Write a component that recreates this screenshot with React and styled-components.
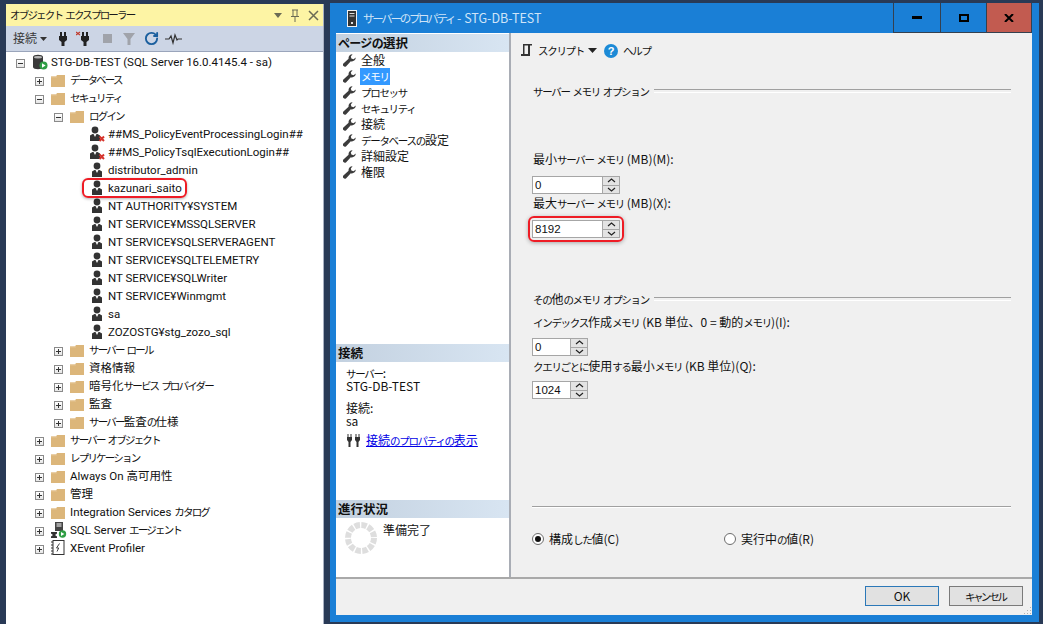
import React from "react";
import styled, { createGlobalStyle } from "styled-components";
import { RotateCw } from "lucide-react";

const Global = createGlobalStyle`
  html, body { margin: 0; padding: 0; height: 624px; overflow: hidden; background: #293a56; }
  * { box-sizing: border-box; }
`;
const UI = `Roboto, "Noto Sans CJK JP", sans-serif`;
const DLG = `"Noto Sans CJK JP", "Noto Sans", sans-serif`;

const Page = styled.div`
  width: 1043px; height: 624px; display: flex; align-items: flex-start; overflow: hidden;
  padding: 3px 0 0 6px; background: #293a56; color: #000; font-feature-settings: "palt";
`;
const Kana = styled.span`
  font-size: var(--ks, 10.500px); letter-spacing: var(--kt, -1.300px); font-family: "Noto Sans CJK JP", sans-serif;
`;
const J = ({ children }) =>
  children.split(/([\u3040-\u30ff]+)/).map((s, i) => (i % 2 ? <Kana key={i}>{s}</Kana> : s));

const Explorer = styled.section`
  --ks: 10.500px; --kt: -1.800px;
  width: 318px; height: 640px; margin-top: 1px; flex: none; display: flex; flex-direction: column;
  font: 11.500px/18px ${UI}; background: #fff; border-right: 1px solid #a8b0c2;
`;
const PaneTitle = styled.div`
  height: 22px; flex: none; background: #fdf4a4; display: flex; align-items: center;
  padding: 0 4px 0 4px; font-size: 12px; color: #1a1a1a;
`;
const PaneTitleText = styled.span` flex: 1; white-space: nowrap; `;
const PaneTools = styled.span` display: flex; align-items: center; gap: 8px; color: #6b6b55; `;
const ToolBar = styled.div`
  height: 26px; flex: none; background: #ccd5e5; display: flex; align-items: center; padding-left: 7px;
  border-bottom: 1px solid #9aa5bb; color: #333;
`;
const ToolLabel = styled.span` font-size: 12px; margin-right: 3px; color: #3a3a3a; `;
const ToolIcon = styled.span`
  width: ${p => p.$w || 22}px; height: 18px; display: flex; align-items: center; justify-content: center; flex: none;
`;
const ToolGap = styled.span` width: ${p => p.$w}px; flex: none; `;
const Tree = styled.div` padding-top: 1px; flex: 1; `;
const Row = styled.div`
  height: 18px; display: flex; align-items: center; padding-left: ${p => 4 + p.$level * 19}px; white-space: nowrap;
  color: #111;
`;
const ExpandSlot = styled.span` width: 22px; flex: none; display: flex; justify-content: center; padding-right: 3px;`;
const Expander = styled.span`
  width: 9px; height: 9px; border: 1px solid #8a8a8a; background: linear-gradient(#fff, #e6e6e6); position: relative;
  margin: 2px 0 0 1px;
  &::before { content: ""; position: absolute; left: 1px; right: 1px; top: 3px; height: 1px; background: #333; }
  &::after { content: ""; display: ${p => (p.$open ? "none" : "block")}; position: absolute; top: 1px; bottom: 1px; left: 3px; width: 1px; background: #333; }
`;
const IconSlot = styled.span` width: 19px; height: 16px; flex: none; display: flex; align-items: center; `;
const Circled = styled.span`
  position: relative; display: inline-block;
  &::after {
    content: ""; position: absolute; left: -26px; right: -5px; top: -1px; bottom: -1px;
    border: 2px solid #ee1c25; border-radius: 6px; box-shadow: 0 1px 3px rgba(0,0,0,.3);
  }
`;

const Dialog = styled.section`
  --ks: 10.500px; --kt: -1.300px;
  width: 709px; height: 619px; margin-left: 6px; flex: none; background: #1a7fd6; display: flex; flex-direction: column;
  font: 12px/16px ${DLG}; color: #111; padding: 0 7px 7px 6px;
`;
const TitleBar = styled.header` height: 30px; flex: none; display: flex; align-items: stretch; `;
const TitleMain = styled.div`
  --ks: 11.500px; --kt: -2.300px;
  flex: 1; display: flex; align-items: center; gap: 6px; padding-left: 11px; color: #cfe4f8; font-size: 12.500px;
`;
const WinBtn = styled.div`
  width: ${p => p.$w}px; background: ${p => p.$bg || "#1a7fd6"}; border: 1px solid #34404f; border-top: 0; border-right-width: ${p => (p.$last ? 1 : 0)}px;
  display: flex; align-items: center; justify-content: center;
`;
const Body = styled.div` height: 546px; flex: none; display: flex; border-bottom: 2px solid #a9a9a9; background: #f0f0f0; `;
const SidePane = styled.aside`
  width: 175px; flex: none; background: #fff; border-right: 2px solid #a9adb5; display: flex; flex-direction: column;
`;
const SideSection = styled.div` height: ${p => p.$h}px; flex: none; display: flex; flex-direction: column; `;
const Strip = styled.div`
  --ks: 12px; --kt: -.700px;
  height: 18px; flex: none; margin-top: ${p => p.$top || 0}px; padding-left: 2px; line-height: 18px;
  background: linear-gradient(90deg, #c3d1e0, #d8e5f2); font-weight: 700; font-size: 12.500px; color: #111;
`;
const NavItem = styled.div` height: 16px; display: flex; align-items: center; padding-left: 7px; gap: 4px; `;
const NavText = styled.span`
  padding: 0 1px; line-height: 16px; background: ${p => (p.$active ? "#3399ff" : "transparent")}; color: ${p => (p.$active ? "#fff" : "#111")};
`;
const Info = styled.div` padding: 4px 0 0 10px; display: flex; flex-direction: column; `;
const InfoLine = styled.div` height: 13px; line-height: 13px; margin-top: ${p => p.$top || 0}px; `;
const LinkRow = styled.div` display: flex; align-items: center; gap: 5px; padding: 5px 0 0 10px; `;
const LinkText = styled.a` color: #0000e6; text-decoration: underline; `;
const Progress = styled.div` display: flex; padding: 4px 0 0 9px; gap: 6px; `;

const MainPane = styled.main` flex: 1; min-width: 0; padding: 0 21px 0 21px; display: flex; flex-direction: column; `;
const MainTools = styled.div` height: 34px; flex: none; margin-left: -12px; display: flex; align-items: center; padding-top: 1px;`;
const ToolText = styled.span` margin-left: 5px; `;
const ToolCaret = styled.svg` margin: 0 7px 0 4px; flex: none; `;
const GroupHead = styled.div`
  height: 16px; margin-top: ${p => p.$top}px; display: flex; align-items: center; gap: 5px; padding-left: 1px; white-space: nowrap;
  &::after { content: ""; flex: 1; height: 2px; border-top: 1px solid #a0a0a0; border-bottom: 1px solid #fff; }
`;
const FieldLabel = styled.div` height: 16px; margin-top: ${p => p.$top}px; padding-left: 1px; white-space: nowrap; `;
const SpinWrap = styled.div`
  position: relative; width: ${p => p.$w}px; height: 18px; margin-top: ${p => p.$top}px; flex: none; display: flex;
  background: #fff; border: 1px solid #a6a6a6;
  ${p => p.$hot && `&::after { content: ""; position: absolute; left: -5px; right: -5px; top: -5px; bottom: -5px; border: 2px solid #ee1c25; border-radius: 6px; box-shadow: 0 1px 4px rgba(0,0,0,.3); }`}
`;
const SpinValue = styled.div` flex: 1; padding-left: 2px; line-height: 16px; font-family: "Liberation Sans", sans-serif; font-size: 11.500px; `;
const SpinBtns = styled.div` width: 17px; flex: none; display: flex; flex-direction: column; gap: 1px; background: #a6a6a6; border-left: 1px solid #a6a6a6; `;
const SpinBtn = styled.div` flex: 1; background: #e3e3e3; display: flex; align-items: center; justify-content: center; `;
const Rule = styled.div` height: 2px; margin-top: ${p => p.$top}px; flex: none; border-top: 1px solid #a0a0a0; border-bottom: 1px solid #fff; `;
const RadioRow = styled.div` display: flex; height: 16px; margin-top: ${p => p.$top}px; `;
const RadioItem = styled.label` width: ${p => p.$w}px; flex: none; display: flex; align-items: center; gap: 5px; `;
const RadioDot = styled.span`
  width: 12px; height: 12px; flex: none; border-radius: 50%; border: 1px solid #6d6d6d; background: #fff; display: flex; align-items: center; justify-content: center;
  &::after { content: ""; width: 6px; height: 6px; border-radius: 50%; background: ${p => (p.$on ? "#111" : "transparent")}; }
`;
const Footer = styled.footer` flex: 1; background: #f0f0f0; display: flex; justify-content: flex-end; align-items: flex-start; gap: 10px; padding: 7px 9px 0 0; position: relative; `;
const Btn = styled.button`
  width: 74px; height: 20px; padding: 0; background: #e1e1e1; border: 1px solid ${p => (p.$primary ? "#2b78b8" : "#7a7a7a")}; font: 12px/16px ${DLG}; color: #111; font-feature-settings: "palt";
`;
const Grip = styled.svg` position: absolute; right: 0; bottom: 0; `;

const Folder = () => (
  <svg width="14" height="13" viewBox="0 0 14 13"><path d="M0 2.500h5l1-1.500h8v12H0z" fill="#dcb67a" /><path d="M0 2.500h6v1H0z" fill="#e5c592" /></svg>
);
const Login = ({ bad }) => (
  <svg width="16" height="16" viewBox="0 0 16 16">
    <g transform={bad ? "translate(-1 0)" : "translate(1 0)"}>
      <circle cx="7" cy="4" r="3.400" fill="#333" />
      <path d="M2 15V9.500L4.500 8h5L12 9.500V15z" fill="#333" />
      <path d="M5.500 8h3L7 11z" fill="#fff" />
    </g>
    {bad && <path d="M10.500 10.500l4.500 4.500m0-4.500L10.500 15" stroke="#d6332b" strokeWidth="2" />}
  </svg>
);
const ServerIcon = () => (
  <svg width="16" height="16" viewBox="0 0 16 16">
    <path d="M1 3c0-3 10-3 10 0v10c0 3-10 3-10 0z" fill="#3a3a3a" />
    <ellipse cx="6" cy="3.200" rx="4" ry="1.200" fill="#b9b9b9" />
    <circle cx="11.500" cy="11.500" r="4" fill="#2f9e44" /><path d="M10 9.300l3.600 2.200-3.600 2.200z" fill="#fff" />
  </svg>
);
const AgentIcon = () => (
  <svg width="16" height="16" viewBox="0 0 16 16">
    <rect x="4" y="0" width="8" height="9" fill="#444" /><path d="M5.500 2h5M5.500 4h5" stroke="#fff" />
    <path d="M0 10h6v1.500L4 13l2 1.500V16H0v-1.500L2 13 0 11.500z" fill="#333" />
    <circle cx="11.500" cy="12" r="3.700" fill="#2f9e44" /><path d="M10 10l3.400 2-3.400 2z" fill="#fff" />
  </svg>
);
const XEventIcon = () => (
  <svg width="14" height="16" viewBox="0 0 14 16">
    <rect x="2" y=".5" width="11" height="14" fill="#fff" stroke="#333" />
    <path d="M0 2h2M0 5h2M0 8h2M0 11h2M0 14h2" stroke="#333" />
    <path d="M8.500 3.500L5.500 8h2.200L6 11.500" fill="none" stroke="#444" />
  </svg>
);
const Plug = ({ x }) => (
  <svg width="18" height="16" viewBox="0 0 18 16">
    <path d="M7 1v4M11 1v4" stroke="#222" strokeWidth="2" /><path d="M5 5h8v4l-2.500 2v4h-3v-4L5 9z" fill="#222" />
    {x && <path d="M0 1l4 3m0-3L0 4" stroke="#c0392b" strokeWidth="1.100" />}
  </svg>
);
const Pulse = () => (
  <svg width="17" height="14" viewBox="0 0 17 14"><path d="M0 7h4l2-3 2 7 2-8 2 5 1-1h4" fill="none" stroke="#333" strokeWidth="1.200" /></svg>
);
const Wrench = () => (
  <svg width="13" height="13" viewBox="0 0 13 13">
    <path d="M12.800 3.400a3.900 3.900 0 0 1-5 3.800L3.200 12.200a2 2 0 0 1-2.700-.1 2 2 0 0 1-.1-2.700l5.200-4.600A3.900 3.900 0 0 1 9.600.2L7.800 2.500l.6 2.100 2.100.6z" fill="#3c3c3c" />
  </svg>
);
const Chevron = ({ down }) => (
  <svg width="9" height="5" viewBox="0 0 9 5"><path d={down ? "M1 1l3.500 3L8 1" : "M1 4l3.500-3L8 4"} fill="none" stroke="#222" strokeWidth="1.200" /></svg>
);
const Spinner = () => (
  <svg width="32" height="32" viewBox="0 0 32 32">
    <circle cx="16" cy="16" r="13" fill="none" stroke="#dedede" strokeWidth="6" strokeDasharray="5.400 1.400" />
  </svg>
);
const Spin = ({ value, w, top, hot }) => (
  <SpinWrap $w={w} $top={top} $hot={hot}>
    <SpinValue>{value}</SpinValue>
    <SpinBtns>
      <SpinBtn><Chevron /></SpinBtn>
      <SpinBtn><Chevron down /></SpinBtn>
    </SpinBtns>
  </SpinWrap>
);

const tree = [
  { l: 0, e: "open", i: "server", t: "STG-DB-TEST (SQL Server 16.0.4145.4 - sa)" },
  { l: 1, e: "plus", i: "folder", t: "データベース" },
  { l: 1, e: "open", i: "folder", t: "セキュリティ" },
  { l: 2, e: "open", i: "folder", t: "ログイン" },
  { l: 3, i: "bad", t: "##MS_PolicyEventProcessingLogin##" },
  { l: 3, i: "bad", t: "##MS_PolicyTsqlExecutionLogin##" },
  { l: 3, i: "login", t: "distributor_admin" },
  { l: 3, i: "login", t: "kazunari_saito", hot: true },
  { l: 3, i: "login", t: "NT AUTHORITY¥SYSTEM" },
  { l: 3, i: "login", t: "NT SERVICE¥MSSQLSERVER" },
  { l: 3, i: "login", t: "NT SERVICE¥SQLSERVERAGENT" },
  { l: 3, i: "login", t: "NT SERVICE¥SQLTELEMETRY" },
  { l: 3, i: "login", t: "NT SERVICE¥SQLWriter" },
  { l: 3, i: "login", t: "NT SERVICE¥Winmgmt" },
  { l: 3, i: "login", t: "sa" },
  { l: 3, i: "login", t: "ZOZOSTG¥stg_zozo_sql" },
  { l: 2, e: "plus", i: "folder", t: "サーバー ロール" },
  { l: 2, e: "plus", i: "folder", t: "資格情報" },
  { l: 2, e: "plus", i: "folder", t: "暗号化サービス プロバイダー" },
  { l: 2, e: "plus", i: "folder", t: "監査" },
  { l: 2, e: "plus", i: "folder", t: "サーバー監査の仕様" },
  { l: 1, e: "plus", i: "folder", t: "サーバー オブジェクト" },
  { l: 1, e: "plus", i: "folder", t: "レプリケーション" },
  { l: 1, e: "plus", i: "folder", t: "Always On 高可用性" },
  { l: 1, e: "plus", i: "folder", t: "管理" },
  { l: 1, e: "plus", i: "folder", t: "Integration Services カタログ" },
  { l: 1, e: "plus", i: "agent", t: "SQL Server エージェント" },
  { l: 1, e: "plus", i: "xevent", t: "XEvent Profiler" },
];
const icons = {
  server: <ServerIcon />, folder: <Folder />, bad: <Login bad />, login: <Login />, agent: <AgentIcon />, xevent: <XEventIcon />,
};
const pages = ["全般", "メモリ", "プロセッサ", "セキュリティ", "接続", "データベースの設定", "詳細設定", "権限"];

export default function App() {
  return (
    <Page>
      <Global />
      <Explorer>
        <PaneTitle>
          <PaneTitleText><J>オブジェクト エクスプローラー</J></PaneTitleText>
          <PaneTools>
            <svg width="8" height="5" viewBox="0 0 8 5"><path d="M0 0h8L4 5z" fill="#6b6b55" /></svg>
            <svg width="10" height="13" viewBox="0 0 10 13"><path d="M2 1h6M3 1v6M7 1v6M1 7.500h8M5 8v5" stroke="#6b6b55" fill="none" /></svg>
            <svg width="11" height="11" viewBox="0 0 11 11"><path d="M1 1l9 9m0-9l-9 9" stroke="#6b6b55" strokeWidth="1.500" /></svg>
          </PaneTools>
        </PaneTitle>
        <ToolBar>
          <ToolLabel>接続</ToolLabel>
          <svg width="7" height="4" viewBox="0 0 7 4"><path d="M0 0h7L3.500 4z" fill="#333" /></svg>
          <ToolGap $w={5} />
          <ToolIcon><Plug /></ToolIcon>
          <ToolIcon><Plug x /></ToolIcon>
          <ToolIcon><svg width="9" height="9"><rect width="9" height="9" fill="#a0a3aa" /></svg></ToolIcon>
          <ToolIcon><svg width="14" height="14" viewBox="0 0 14 14"><path d="M1 1h12L8.500 7v6h-3V7z" fill="#a0a3aa" /></svg></ToolIcon>
          <ToolIcon><RotateCw size={15} color="#1b5f9e" strokeWidth={3} /></ToolIcon>
          <ToolIcon><Pulse /></ToolIcon>
        </ToolBar>
        <Tree>
          {tree.map(n => (
            <Row key={n.t} $level={n.l}>
              <ExpandSlot>{n.e && <Expander $open={n.e === "open"} />}</ExpandSlot>
              <IconSlot>{icons[n.i]}</IconSlot>
              {n.hot ? <Circled>{n.t}</Circled> : <span><J>{n.t}</J></span>}
            </Row>
          ))}
        </Tree>
      </Explorer>

      <Dialog>
        <TitleBar>
          <TitleMain>
            <svg width="10" height="17" viewBox="0 0 10 17"><rect width="10" height="17" fill="#f2f2f2" /><rect x="1" y="1" width="8" height="15" fill="#333" /><path d="M2.500 3.500h5M2.500 6h5" stroke="#ddd" /><rect x="4" y="12" width="2" height="2" fill="#ddd" /></svg>
            <span><J>サーバーのプロパティ - STG-DB-TEST</J></span>
          </TitleMain>
          <WinBtn $w={47}><svg width="10" height="3"><rect width="10" height="3" fill="#000" /></svg></WinBtn>
          <WinBtn $w={46}><svg width="10" height="8"><rect x="1" y="1" width="8" height="6" fill="none" stroke="#000" strokeWidth="2" /></svg></WinBtn>
          <WinBtn $w={46} $bg="#c25b50" $last><svg width="10" height="8" viewBox="0 0 10 8"><path d="M1 0l8 8m0-8L1 8" stroke="#000" strokeWidth="2" /></svg></WinBtn>
        </TitleBar>
        <Body>
          <SidePane>
            <SideSection $h={311}>
              <Strip $top={1}><J>ページの選択</J></Strip>
              {pages.map(p => (
                <NavItem key={p}><Wrench /><NavText $active={p === "メモリ"}><J>{p}</J></NavText></NavItem>
              ))}
            </SideSection>
            <SideSection $h={156}>
              <Strip>接続</Strip>
              <Info>
                <InfoLine><J>サーバー:</J></InfoLine>
                <InfoLine>STG-DB-TEST</InfoLine>
                <InfoLine $top={9}>接続:</InfoLine>
                <InfoLine>sa</InfoLine>
              </Info>
              <LinkRow>
                <svg width="15" height="13" viewBox="0 0 15 13"><path d="M2 0v4M5 0v4M10 0v4M13 0v4" stroke="#333" /><path d="M1 3h5v3L4.500 8v5h-2V8L1 6zM9 3h5v3l-1.500 2v5h-2V8L9 6z" fill="#333" /></svg>
                <LinkText><J>接続のプロパティの表示</J></LinkText>
              </LinkRow>
            </SideSection>
            <SideSection $h={79}>
              <Strip>進行状況</Strip>
              <Progress>
                <Spinner />
                <span>準備完了</span>
              </Progress>
            </SideSection>
          </SidePane>
          <MainPane>
            <MainTools>
              <svg width="13" height="15" viewBox="0 0 13 15"><path d="M3 1h9v1.500h-2V13H1v-2h2zM4.500 2.500V11H8V2.500z" fill="#333" /></svg>
              <ToolText><J>スクリプト</J></ToolText>
              <ToolCaret width="9" height="5" viewBox="0 0 9 5"><path d="M0 0h9L4.500 5z" fill="#222" /></ToolCaret>
              <svg width="14" height="14" viewBox="0 0 14 14"><circle cx="7" cy="7" r="7" fill="#1c8ad6" /><text x="7" y="11" textAnchor="middle" fontSize="11" fontWeight="700" fill="#fff" fontFamily="Liberation Sans">?</text></svg>
              <ToolText><J>ヘルプ</J></ToolText>
            </MainTools>
            <GroupHead $top={16}><span><J>サーバー メモリ オプション</J></span></GroupHead>
            <FieldLabel $top={52}><J>最小サーバー メモリ (MB)(M):</J></FieldLabel>
            <Spin value="0" w={88} top={9} />
            <FieldLabel $top={1}><J>最大サーバー メモリ (MB)(X):</J></FieldLabel>
            <Spin value="8192" w={88} top={9} hot />
            <GroupHead $top={53}><span><J>その他のメモリ オプション</J></span></GroupHead>
            <FieldLabel $top={7}><J>インデックス作成メモリ (KB 単位、0 = 動的メモリ)(I):</J></FieldLabel>
            <Spin value="0" w={56} top={8} />
            <FieldLabel $top={2}><J>クエリごとに使用する最小メモリ (KB 単位)(Q):</J></FieldLabel>
            <Spin value="1024" w={56} top={7} />
            <Rule $top={107} />
            <RadioRow $top={23}>
              <RadioItem $w={192}><RadioDot $on /><span><J>構成した値(C)</J></span></RadioItem>
              <RadioItem $w={150}><RadioDot /><span><J>実行中の値(R)</J></span></RadioItem>
            </RadioRow>
          </MainPane>
        </Body>
        <Footer>
          <Btn $primary>OK</Btn>
          <Btn><J>キャンセル</J></Btn>
          <Grip width="9" height="9" viewBox="0 0 9 9"><path d="M7 1h1v1H7zM4 4h1v1H4zM7 4h1v1H7zM1 7h1v1H1zM4 7h1v1H4zM7 7h1v1H7z" fill="#b0b0b0" /></Grip>
        </Footer>
      </Dialog>
    </Page>
  );
}
